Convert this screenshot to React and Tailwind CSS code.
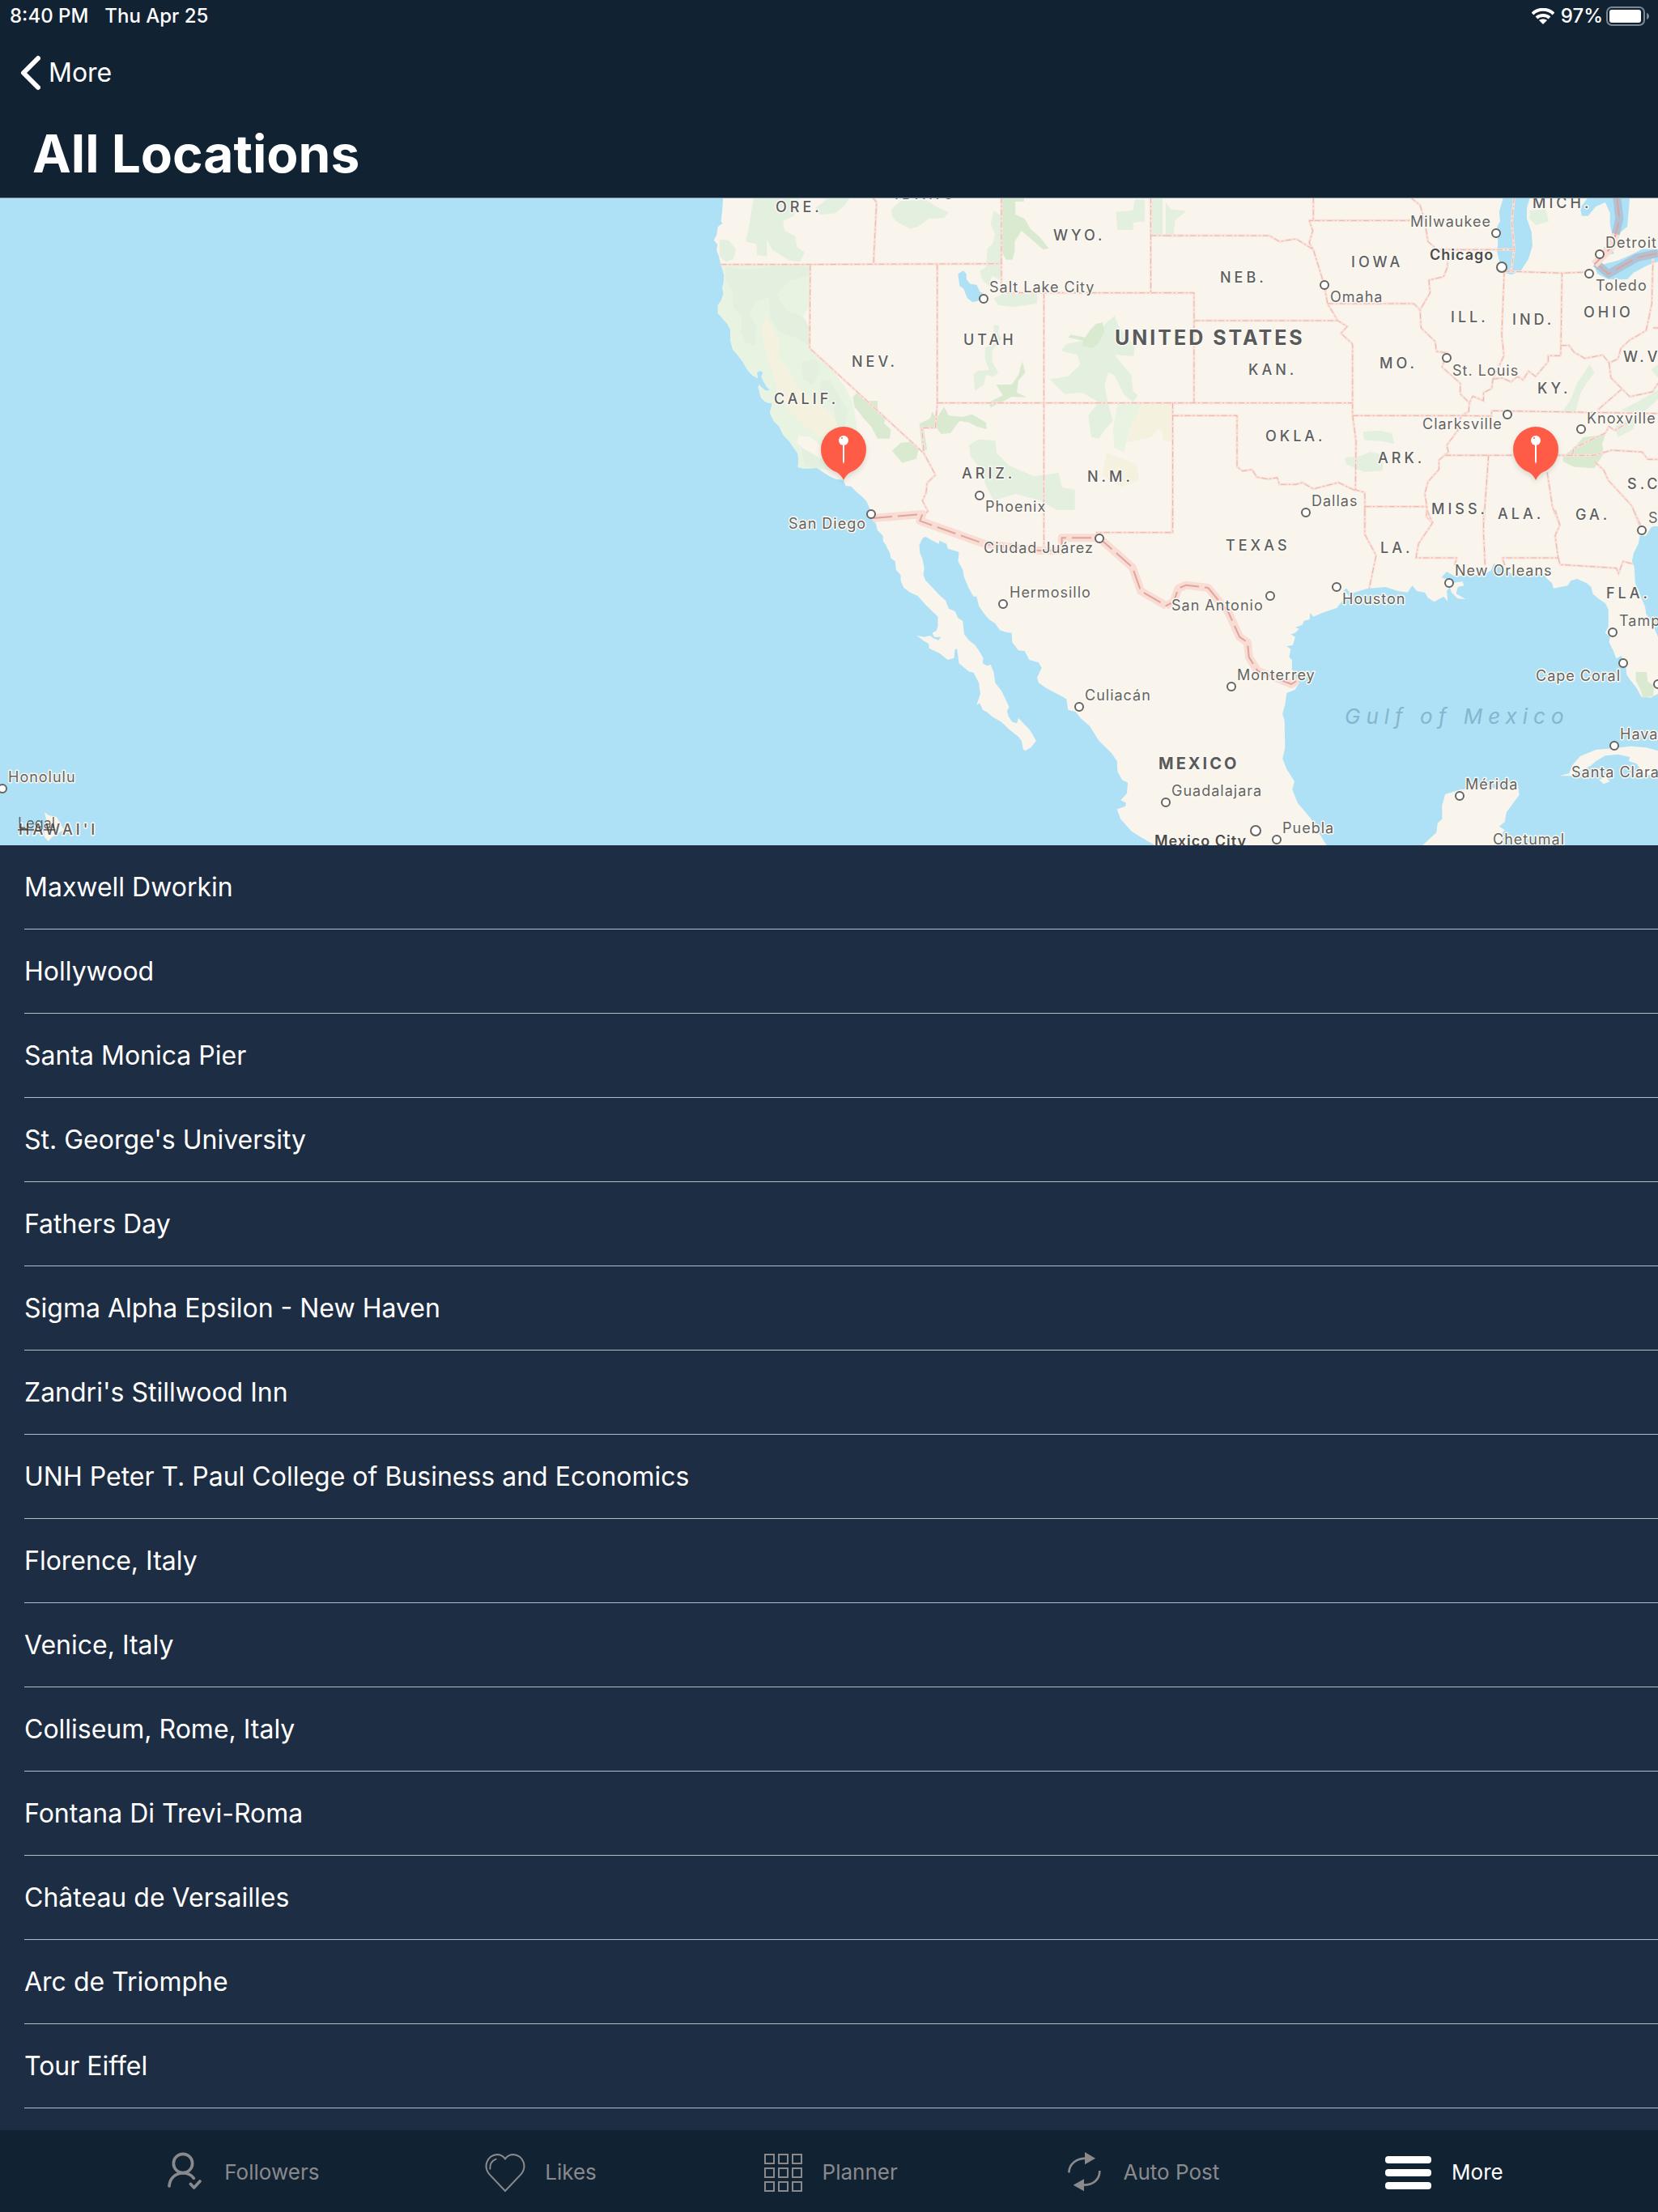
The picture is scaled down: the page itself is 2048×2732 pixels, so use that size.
import React from 'react';

const LOCATIONS = [
  'Maxwell Dworkin',
  'Hollywood',
  'Santa Monica Pier',
  "St. George's University",
  'Fathers Day',
  'Sigma Alpha Epsilon - New Haven',
  "Zandri's Stillwood Inn",
  'UNH Peter T. Paul College of Business and Economics',
  'Florence, Italy',
  'Venice, Italy',
  'Colliseum, Rome, Italy',
  'Fontana Di Trevi-Roma',
  'Château de Versailles',
  'Arc de Triomphe',
  'Tour Eiffel',
];

// ── Map data ──────────────────────────────────────────────────
// The map is split in four tiles, each with its own local coordinates.

const PACIFIC_COAST =
  'M87 42L84 90L80 130L85 138L70 150L66 180L57 200L68 215L66 240L72 255L78 285L85 310L90 330L88 360L84 375L88 400L80 425L70 440L70 470L85 490L100 510L110 530L110 570L118 605L130 620L150 650L165 680L180 700L198 712L196 690L206 683L216 690L210 705L218 725L228 745L238 755L225 758L210 745L203 735L200 745L206 770L210 785L225 800L245 805L238 840L250 870L268 890L280 920L300 945L315 970L328 990L330 1020L328 1040L345 1046L390 1044L410 1060L430 1075L450 1085L475 1088L482 1110L500 1112L515 1130L535 1150L550 1168L560 1195L568 1215H1620V42Z';

const TILES = [
  {
    id: 'nw',
    transform: 'translate(860 230) scale(0.3827 0.3333)',
    land: [PACIFIC_COAST],
    areas: [
      { fill: '#e8f3e2', d: 'M40 290H368L366 600L440 680L480 745L505 800L520 900L470 960L430 1050L400 1050L330 1046L280 960L200 800L60 500Z' },
      { fill: '#e3efdf', d: 'M95 300L160 310L290 292L365 300L362 330L300 350L260 400L290 460L340 480L366 520L366 590L320 560L270 540L240 490L235 410L190 430L170 470L195 520L190 590L160 580L145 540L148 480L120 450L118 390L95 350Z' },
      { fill: '#e3efdf', d: 'M340 650L385 640L400 665L395 700L375 735L345 715ZM400 725L430 715L460 780L490 830L480 890L450 890L445 820L400 770ZM340 975L370 980L410 1030L400 1046L350 1035Z' },
      { fill: '#f4f2df', d: 'M225 480L245 520L268 570L265 640L290 665L325 740L400 810L445 850L460 905L400 930L350 890L300 830L265 770L250 700L230 640L215 560L212 520Z' },
      { fill: '#f9f5ed', d: 'M330 925L370 930L400 960L405 1010L350 975L325 950ZM345 480L368 440L368 530Z' },
      { fill: '#e3efdf', d: 'M185 42L330 42L315 110L280 130L285 165L320 185L325 225L350 245L335 280L300 275L245 235L228 200L228 260L195 255L195 215L160 205L170 150ZM210 170L228 172L226 198L205 198ZM385 80L425 45H495L480 70L450 100L400 105Z' },
      { fill: '#e3efdf', d: 'M75 198L105 200L128 235L120 270L95 280L75 260ZM630 85L660 55L740 50L790 85L815 95L800 118L750 120L715 150L690 158L645 130L632 110Z' },
      { fill: '#e3efdf', d: 'M960 90L985 110V340L975 345L955 330L945 370L925 350L915 315L935 300L940 230L955 215L965 180L950 140ZM960 415L990 400H1102L1100 435L1020 447L975 440Z' },
      { fill: '#d9ead1', d: 'M985 42H1058V57H1030V105L1060 120L1080 160L1110 190L1138 230L1120 235L1080 195L1050 165L1028 205V240L1020 272H1000L985 240Z' },
      { fill: '#e3efdf', d: 'M1355 95L1410 90L1415 50H1448V130L1410 135V162H1360ZM1468 42H1520L1522 80L1568 75V175L1545 170L1535 120L1530 180H1468Z' },
      { fill: '#e3efdf', d: 'M960 515H978L975 545L985 565L955 610V650L975 690L960 705L935 700L928 735L900 758L895 700L905 685L945 680L932 640V600L960 580Z' },
      { fill: '#d9ead1', d: 'M1052 648L1062 690L1040 720L1035 765L1068 782L1020 780L950 820L945 800L990 775L968 735L1018 735L1040 700Z' },
      { fill: '#e3efdf', d: 'M1350 480L1362 515L1390 560L1415 590L1412 630L1350 625L1375 660L1405 700L1410 760L1425 775L1410 800L1380 770L1350 700L1330 690L1318 740L1335 830L1345 870L1320 900L1300 935L1275 930L1265 850L1300 800L1245 765L1190 770L1140 715L1200 705L1240 660L1230 625L1178 610L1195 585L1290 560L1320 510Z' },
      { fill: '#d9ead1', d: 'M1290 510L1312 505L1318 540L1300 580L1280 600L1245 590L1250 572L1200 560L1210 550L1255 560L1270 535Z' },
      { fill: '#e8f3e2', d: 'M1360 803H1440L1400 900L1380 985L1350 970L1345 900Z' },
      { fill: '#f4f2df', d: 'M1440 803H1568V950L1490 900L1470 930L1390 950L1410 870ZM1325 985L1350 1000L1420 1030L1430 1090L1370 1115L1310 1070Z' },
      { fill: '#d9ead1', d: 'M505 780L520 765L550 795H585L587 840L610 855L607 880L628 900L625 935H585L565 890L540 860L510 815ZM632 980L660 950L690 948L718 975L710 1010L665 1025Z' },
      { fill: '#d9ead1', d: 'M720 880L755 860L762 835L775 860L800 818L815 850L860 855L890 845L935 875L938 900L905 890L880 875L850 870L820 915L790 918L775 895L735 900L745 975L730 985Z' },
      { fill: '#e3efdf', d: 'M880 960L910 938L965 942L970 990L1010 1035L1090 1075L1170 1062L1180 1115L1222 1125V1210H1180L1110 1165L1030 1140L960 1165L935 1110L920 1050L885 1000Z' },
      { fill: '#aee1f6', d: 'M862 313L872 325V345L885 362L905 365L915 390L928 400L910 425L892 430L875 415L862 378L850 370L845 325Z' },
    ],
    borders: [
      'M80 290H370L985 287M570 42L582 60L572 290M985 42V375L995 395H1568M1122 395V1260M1467 42V395M1467 183H1568',
      'M368 292L366 600L735 990L772 1070L745 1100L742 1135L730 1165L748 1205L735 1218M778 290V803L772 895H728L735 990',
      'M778 803H1568M1538 803V1260M1538 850H1568',
    ],
    frontiers: [],
  },
  {
    id: 'ne',
    transform: 'translate(1440 230) scale(0.3878 0.3333)',
    land: ['M-10 42H1568V1260H-10Z'],
    areas: [
      { fill: '#e3efdf', d: 'M0 60L15 85L65 92L30 125L25 180H0ZM1160 90L1210 85L1220 130L1180 145L1158 120ZM1350 660L1366 690L1340 730L1320 770L1305 838H1262L1290 790L1310 730ZM628 910L680 905L720 915L728 955L690 945L632 940Z' },
      { fill: '#e3efdf', d: 'M570 1005L620 1000L650 985L695 995L690 1055L630 1058L575 1030ZM1568 660L1545 680L1568 710ZM1568 755L1500 800L1450 830L1500 840L1430 890L1440 930L1490 900L1500 860L1568 790Z' },
      { fill: '#f4f2df', d: 'M-10 803H22V950L-10 940Z' },
      { fill: '#d9ead1', d: 'M1265 1000L1300 970L1330 930L1400 920L1390 955L1395 990L1365 1045L1300 1040L1265 1020Z' },
      { fill: '#aee1f6', d: 'M1075 42L1062 95L1065 130L1055 150L1058 210L1055 240L1065 290L1080 320L1100 328L1130 315L1155 270L1168 220L1165 170L1150 120V80L1160 42Z' },
      { fill: '#aee1f6', d: 'M1345 42L1320 80L1325 110L1345 110L1370 75L1400 60L1415 100V140L1420 170L1440 178L1470 150L1478 42ZM1395 225L1420 230L1428 250L1400 255Z' },
      { fill: '#aee1f6', d: 'M1568 235L1520 232L1480 255L1440 275L1390 290L1365 295L1375 325L1410 345H1470L1490 320L1540 290L1568 280Z' },
    ],
    borders: [
      'M470 42V127H780M470 127H457L468 165L457 210L470 235L505 366L515 435L548 498L578 520L558 545L595 585V850M0 183H330L362 205L415 195L470 235M515 435H790L810 458',
      'M780 42L810 70L825 130L835 205L865 235H1110M865 235L898 255L897 300L885 335L838 348L842 395L810 458L813 525L858 575L862 612L895 618L880 670L938 730V770L967 803L965 835L940 852L930 905L895 960L900 985L870 1015V1050L835 1095L825 1140L832 1188L830 1225L850 1247',
      'M0 395H90V803M90 498H548M0 803H595M595 850H940L1038 852V832L1568 842M595 850L606 945L604 1125L634 1135V1260M634 1187H830M22 803V1260M22 850H227V1040L245 1055L275 1050L290 1078L325 1085L355 1080L362 1105H415L435 1098L470 1122L550 1098L604 1128',
      'M1110 42L1102 130L1110 235L1100 315M1078 315L1262 322L1340 318M1078 315L1070 550L1077 628L1042 715L1038 750L1012 765V795L978 778L967 803M1042 715L1070 710L1100 725L1120 705L1138 718L1155 685L1178 705L1218 650V628H1258L1262 322',
      'M1258 590H1285L1300 615L1335 638L1392 625L1412 655L1440 640L1450 600L1478 570L1530 535L1548 435L1552 260M1552 525H1568M1412 655L1418 710L1478 780L1550 762L1568 730M1452 752L1375 830',
      'M890 997H1365L1420 978L1518 985L1535 1012H1568M1365 1020L1395 1052L1410 1090L1485 1185L1510 1260M1028 997L1012 1260M1215 1060L1232 1190L1255 1255M1295 995L1300 970L1400 915L1412 890L1430 905L1480 870',
    ],
    frontiers: [{ water: true, d: 'M1437 42L1445 120L1433 178M1370 285L1410 325L1500 265L1568 248' }, { d: 'M1433 178L1420 225L1365 290' }],
  },
  {
    id: 'sw',
    transform: 'translate(860 630) scale(0.3827 0.3333)',
    land: [
      'M560 0L568 35L580 50L585 75L603 95V115L612 130L625 160L628 178L642 190L645 222L660 240V262L670 288L690 305L715 318L740 350L780 395V430L775 448L762 455L768 470H790L782 482L765 475L755 465L735 470L712 465L735 485L750 495L752 512L785 530L812 555L832 548L835 515H842L848 568L880 598L895 602L912 640L917 680L905 722L915 715L925 740L940 750L955 765L985 785L1010 812L1040 840L1050 855L1055 885L1062 892L1080 880L1097 855L1085 830L1075 812L1060 795L1040 770L1035 790L1020 785L1008 765L1003 745L1010 730L1000 705L985 670L965 640L960 600L950 572L935 575L925 545L915 525L900 500L880 482L865 460L860 410L845 400L835 375L815 365L805 335L785 315L765 290L740 260L733 240L736 215L730 180L722 160L720 130L730 105L740 98L760 112L783 125L785 113L808 125L812 143L848 155L845 190L860 220L865 250L880 290L895 320H905L912 355L930 385L945 405L965 420L980 445L1000 452L1018 455L1020 490L1040 520L1060 522L1075 555L1105 565L1115 585L1100 620L1105 640L1130 660L1160 678L1195 700L1200 740L1225 748L1240 770L1270 800L1300 855L1340 900L1358 930L1360 970L1375 1000L1393 1010L1390 1050L1370 1075L1388 1085L1385 1098L1358 1108L1370 1145L1405 1190L1440 1215L1480 1242H1620V0Z',
    ],
    areas: [{ fill: '#aee1f6', d: 'M925 552L945 560L950 572L938 577L925 568Z' }],
    borders: ['M1122 0V148M1536 0V83H1290'],
    frontiers: [{ d: 'M570 30L730 15L722 40L930 125L1105 150H1180V103H1300L1408 212L1435 300L1518 355' }],
  },
  {
    id: 'se',
    transform: 'translate(1440 630) scale(0.3878 0.3333)',
    land: [
      'M-10 0H1568V50L1545 65L1530 95H1510L1505 125L1490 160L1485 190L1492 210L1495 270L1510 310L1527 360L1530 385L1545 410L1568 470V680L1545 695L1515 692L1500 660L1480 630L1468 610L1465 570L1450 540L1435 550L1425 520L1412 490L1415 470L1400 455L1410 430V370L1400 345L1380 330L1360 310L1355 285L1340 270L1310 255L1290 262L1280 280L1235 290L1230 270L1215 255L1205 240L1150 232L1100 235L1075 220L1045 198L1035 225L1010 240H970L920 245L895 228L878 250L900 258L910 270L945 265L950 280L930 285L925 310L955 330L930 328L910 305L905 285L895 300L898 338L885 320L855 340L835 325L825 305L800 300L785 280L770 305L740 300L700 285L645 290L615 300L590 310L575 290L565 300L582 315L560 340L545 362L500 380L470 395L460 380L458 405L440 410L435 425L412 435L425 440L412 455L398 460L412 470L405 500L385 505L398 515L393 545L402 555V590L415 620L425 640L412 665L385 678L380 720L372 755L378 780L380 880L372 920L385 960L410 1005L403 1035L420 1085L460 1140L490 1200L512 1242H-10Z',
      'M818 1242L862 1195L866 1160L880 1145V1095L890 1053L940 1035L1000 1030H1060L1122 1020L1126 1055L1085 1120L1080 1155L1062 1172L1080 1185L1070 1200L1075 1242Z',
      'M1255 985L1285 975L1295 945L1320 912L1370 888L1430 882L1480 875L1530 880L1568 892V990L1520 975L1500 940L1475 930L1478 915L1440 905L1400 910L1370 930L1350 950L1320 965L1290 985ZM1380 1000L1400 990L1415 1005L1395 1015Z',
    ],
    areas: [{ fill: '#d9ead1', d: 'M1497 600H1532L1535 635L1555 650L1553 690L1520 695L1510 660L1497 632Z' }],
    borders: [
      'M22 0V83H0M634 0V90L670 168L648 290M832 0L850 47L805 125L797 177H927L920 205M1012 0V80L1017 205',
      'M1080 205L1072 177H1250L1240 95L1255 55L1240 0M1250 177L1256 202L1435 215L1442 235L1457 190L1488 200M1490 0L1512 55',
    ],
    frontiers: [{ d: 'M0 355L25 340L40 290L65 278L135 288L200 380L235 470L260 490L265 545L292 595L400 645L420 630' }],
  },
];

const STATES = [
  ['ORE.', 958, 262], ['IDAHO', 1105, 246], ['WYO.', 1301, 297], ['UTAH', 1190, 426], ['NEV.', 1052, 453],
  ['CALIF.', 956, 499], ['ARIZ.', 1188, 591], ['N.M.', 1343, 595], ['MICH.', 1893, 257], ['IOWA', 1669, 330],
  ['NEB.', 1507, 349], ['KAN.', 1542, 463], ['MO.', 1704, 455], ['ILL.', 1792, 398], ['IND.', 1868, 401],
  ['OHIO', 1956, 392], ['W.VA.', 2005, 447], ['KY.', 1899, 486], ['OKLA.', 1563, 545], ['ARK.', 1702, 572],
  ['MISS.', 1768, 635], ['ALA.', 1850, 641], ['GA.', 1946, 642], ['S.C.', 2010, 604], ['TEXAS', 1514, 680],
  ['LA.', 1705, 683], ['FLA.', 1984, 739], ["HAWAI'I", 23, 1031],
];

// name, label x, label baseline, dot x, dot y
const CITIES = [
  ['Salt Lake City', 1222, 361, 1215, 369],
  ['Phoenix', 1217, 632, 1210, 612],
  ['San Diego', 974, 653, 1076, 635],
  ['Ciudad Juárez', 1215, 683, 1358, 665],
  ['Hermosillo', 1247, 738, 1239, 746],
  ['Culiacán', 1340, 865, 1333, 873],
  ['Guadalajara', 1447, 983, 1440, 991],
  ['Puebla', 1584, 1029, 1577, 1037],
  ['Milwaukee', 1742, 280, 1848, 288],
  ['Detroit', 1983, 306, 1976, 314],
  ['Toledo', 1971, 359, 1963, 338],
  ['Omaha', 1643, 373, 1636, 352],
  ['St. Louis', 1794, 464, 1787, 442],
  ['Clarksville', 1757, 530, 1862, 512],
  ['Knoxville', 1960, 523, 1953, 530],
  ['Dallas', 1620, 625, 1613, 633],
  ['Savannah', 2036, 646, 2028, 655],
  ['New Orleans', 1797, 711, 1790, 720],
  ['Houston', 1658, 746, 1651, 725],
  ['San Antonio', 1447, 754, 1569, 736],
  ['Tampa', 2000, 773, 1992, 781],
  ['Cape Coral', 1897, 841, 2005, 819],
  ['Monterrey', 1528, 840, 1521, 848],
  ['Mérida', 1810, 975, 1803, 983],
  ['Honolulu', 10, 966, 3, 974],
  ['Havana', 2001, 913, 1994, 921],
];

const HALO = 'stroke-[#fbf9f4] stroke-3 [paint-order:stroke] [stroke-linejoin:round]';

const Pin = ({ x, y }) => (
  <g transform={`translate(${x} ${y})`} className="drop-shadow-md">
    <path d="M0 0C-2 -4 -5 -8 -9 -10C-20 -14 -28 -25 -28 -38A28 28 0 0 1 28 -38C28 -25 20 -14 9 -10C5 -8 2 -4 0 0Z" fill="#ff5c47" />
    <path d="M-1 -43H1L1 -23L0 -20L-1 -23Z" fill="#fff" />
    <circle cy="-49" r="6" fill="#fff" />
    <circle cx="-2" cy="-52" r="1" fill="#ff5c47" />
  </g>
);

const LocationMap = () => (
  <svg
    viewBox="0 245 2048 799"
    preserveAspectRatio="xMidYMid slice"
    className="block w-full bg-[#aee1f6]"
    role="img"
    aria-label="Map of locations"
  >
    <defs>
      <clipPath id="west-coast">
        <path d={PACIFIC_COAST} />
      </clipPath>
    </defs>

    {/* Land, parks and lakes */}
    {TILES.map(tile => (
      <g key={tile.id} transform={tile.transform}>
        {tile.land.map((d, i) => <path key={i} d={d} fill="#f9f5ed" />)}
        <g clipPath={tile.id === 'nw' ? 'url(#west-coast)' : undefined}>
          {tile.areas.map((area, i) => <path key={i} d={area.d} fill={area.fill} />)}
        </g>
      </g>
    ))}
    <path d="M55 1003L60 1007L70 1009L75 1018L79 1025L70 1030L63 1035L60 1039L55 1034L54 1022L57 1012Z" fill="#f9f5ed" />

    {/* Borders */}
    {TILES.map(tile => (
      <g key={tile.id} transform={tile.transform} fill="none">
        {tile.borders.map((d, i) => (
          <g key={i}>
            <path d={d} stroke="#fae0d8" strokeWidth="3" vectorEffect="non-scaling-stroke" />
            <path d={d} stroke="#e6b5ab" strokeWidth="1" strokeDasharray="7 3 2 3" vectorEffect="non-scaling-stroke" />
          </g>
        ))}
        {tile.frontiers.map((line, i) => (
          <g key={i} strokeLinejoin="round">
            <path d={line.d} stroke={line.water ? '#afc3d8' : '#f9dcd4'} strokeWidth="10" vectorEffect="non-scaling-stroke" />
            <path d={line.d} stroke="#dfa59b" strokeWidth="2" strokeDasharray="24 7" vectorEffect="non-scaling-stroke" />
          </g>
        ))}
      </g>
    ))}

    {/* City dots */}
    <g fill="#fff" stroke="#66645f" strokeWidth="2">
      {CITIES.map(([name, , , cx, cy]) => <circle key={name} cx={cx} cy={cy} r="5" />)}
      <circle cx="1855" cy="330" r="6" />
      <circle cx="1551" cy="1026" r="6" />
      <circle cx="2048" cy="845" r="5" />
    </g>

    {/* Labels */}
    <g className={`text-[18px] font-medium tracking-[4px] fill-[#5f5f5f] ${HALO}`}>
      {STATES.map(([name, x, y]) => <text key={name} x={x} y={y}>{name}</text>)}
    </g>
    <g className={`text-[18px] tracking-[1px] fill-[#666461] ${HALO}`}>
      {CITIES.map(([name, x, y]) => <text key={name} x={x} y={y}>{name}</text>)}
      <text x="1941" y="960">Santa Clara</text>
      <text x="1844" y="1043">Chetumal</text>
    </g>
    <g className={`text-[18px] font-semibold tracking-[1px] fill-[#4c4b49] ${HALO}`}>
      <text x="1766" y="321">Chicago</text>
      <text x="1426" y="1045">Mexico City</text>
    </g>
    <text x="1377" y="426" className={`text-[25px] font-bold tracking-[3px] fill-[#5a5a5a] ${HALO}`}>UNITED STATES</text>
    <text x="1431" y="950" className={`text-[20px] font-bold tracking-[3px] fill-[#5a5a5a] ${HALO}`}>MEXICO</text>
    <text x="1661" y="894" className="text-[26px] italic tracking-[7px] fill-[#84b6cf]">Gulf of Mexico</text>
    <a href="#legal">
      <text x="22" y="1023" className="text-[18px] underline fill-[#333333] opacity-70">Legal</text>
    </a>

    <Pin x={1042} y={593} />
    <Pin x={1897} y={593} />
  </svg>
);

// ── Tab icons ─────────────────────────────────────────────────
const FollowersIcon = () => (
  <svg viewBox="0 0 150 150" className="size-[50px]" fill="none" stroke="currentColor" strokeWidth="11" strokeLinecap="round" strokeLinejoin="round">
    <circle cx="69" cy="42" r="35" />
    <path d="M18 126C20 98 40 78 69 78C90 78 103 88 109 97" />
    <path d="M97 118L110 132L132 108" />
  </svg>
);

const LikesIcon = () => (
  <svg viewBox="0 0 150 150" className="size-[50px]" fill="none" stroke="currentColor" strokeWidth="6" strokeLinecap="round">
    <path d="M75 144L17 83C-8 54 8 13 44 9C57 9 68 15 75 25C82 15 93 9 106 9C142 13 158 54 133 83Z" />
    <path d="M19 62C18 44 26 32 41 26" />
  </svg>
);

const PlannerIcon = () => (
  <svg viewBox="0 0 50 50" className="size-[50px]" fill="none" stroke="currentColor" strokeWidth="2">
    {[3, 20, 37].map(y => [3, 20, 37].map(x => <rect key={`${x}-${y}`} x={x} y={y} width="11" height="11" />))}
  </svg>
);

const AutoPostIcon = () => (
  <svg viewBox="0 0 150 150" className="size-[50px]" fill="none" stroke="currentColor" strokeWidth="8">
    <path d="M19 76C20 45 45 24 80 23M133 69C133 100 112 122 72 122" />
    <path d="M78 0L117 23L78 46ZM75 100L35 122L75 145Z" fill="currentColor" stroke="none" />
  </svg>
);

const MoreIcon = () => (
  <svg viewBox="0 0 58 50" className="h-[50px] w-[58px]" fill="currentColor">
    <rect y="5" width="57" height="9" rx="4" />
    <rect y="21" width="57" height="9" rx="4" />
    <rect y="37" width="57" height="9" rx="4" />
  </svg>
);

const TABS = [
  { label: 'Followers', icon: FollowersIcon },
  { label: 'Likes', icon: LikesIcon },
  { label: 'Planner', icon: PlannerIcon },
  { label: 'Auto Post', icon: AutoPostIcon },
  { label: 'More', icon: MoreIcon, active: true },
];

const StatusBar = () => (
  <div className="flex h-10 items-center justify-between pl-3 pr-2.5 text-2xl font-medium">
    <div className="flex gap-5">
      <span>8:40 PM</span>
      <span>Thu Apr 25</span>
    </div>
    <div className="flex items-center gap-2">
      <svg viewBox="0 0 28 20" className="h-5 w-7" fill="none" stroke="currentColor" strokeWidth="4">
        <path d="M1 7C8 0 20 0 27 7M6 12C10 8 18 8 22 12" />
        <path d="M14 20L9 15C12 13 16 13 19 15Z" fill="currentColor" stroke="none" />
      </svg>
      <div className="flex items-center gap-1">
        <span>97%</span>
        <svg viewBox="0 0 54 24" className="h-6 w-[54px]">
          <rect x="1" y="1" width="46" height="22" rx="6" fill="none" stroke="#7d8791" strokeWidth="2" />
          <rect x="4" y="4" width="39" height="16" rx="3" fill="#fff" />
          <path d="M50 8C54 9 54 15 50 16Z" fill="#7d8791" />
        </svg>
      </div>
    </div>
  </div>
);

const App = () => (
  <div className="flex min-h-screen flex-col overflow-hidden bg-[#1d2d43] font-[Inter,sans-serif] text-white">
    <header className="border-b border-[#8a98a4] bg-[#112233]">
      <StatusBar />
      <button type="button" className="flex h-[100px] items-center gap-2.5 pl-6 text-[32px]">
        <svg viewBox="0 0 26 44" className="h-11 w-[26px]" fill="none" stroke="currentColor" strokeWidth="6" strokeLinecap="round" strokeLinejoin="round">
          <path d="M23 4L5 22L23 40" />
        </svg>
        More
      </button>
      <h1 className="flex h-[104px] items-center pl-10 pb-5 pt-4 text-[64px] font-bold">All Locations</h1>
    </header>

    <LocationMap />

    <ul className="flex-1 pl-[30px]">
      {LOCATIONS.map(name => (
        <li key={name} className="flex h-[104px] items-center border-b border-[#b4bcc5] text-[32px]">{name}</li>
      ))}
    </ul>

    <nav className="flex h-[101px] items-center justify-center gap-[10vw] bg-[#112233] pl-3 pt-0.5 text-[26px] text-[#8a8a8c]">
      {TABS.map(tab => (
        <button
          key={tab.label}
          type="button"
          className={`flex items-center gap-6 ${tab.active ? 'text-white' : ''}`}
        >
          <tab.icon />
          {tab.label}
        </button>
      ))}
    </nav>
  </div>
);

export default App;
